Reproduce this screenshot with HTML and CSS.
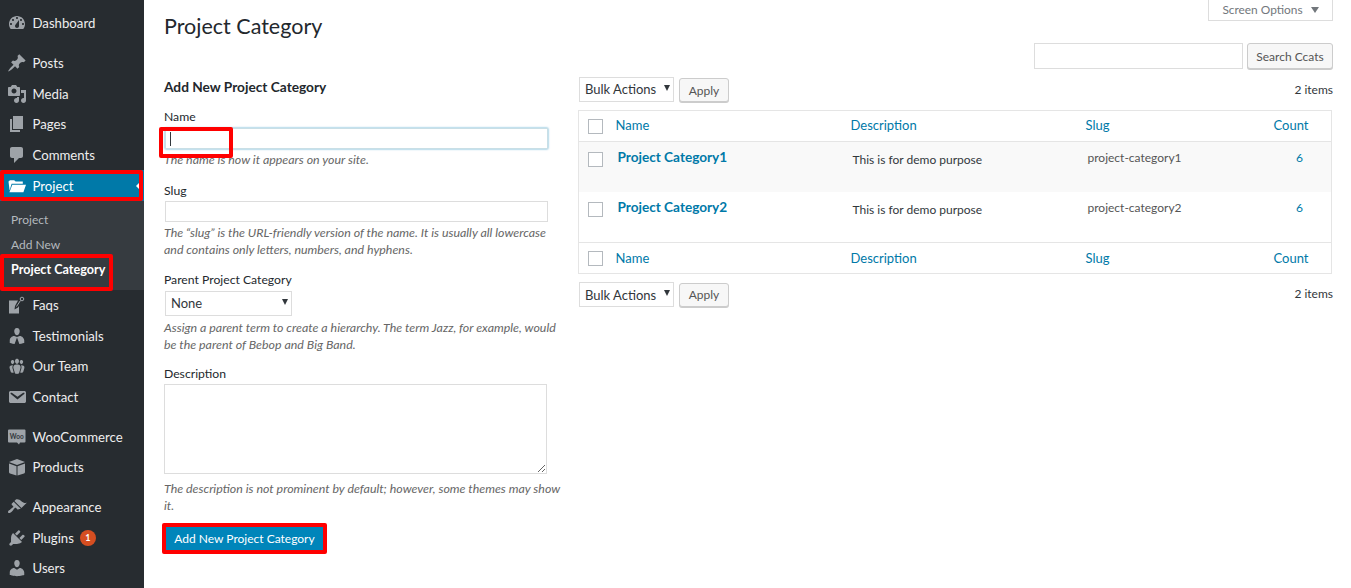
FILE: index.html
```html
<!DOCTYPE html>
<html lang="en">
<head>
<meta charset="utf-8">
<title>Project Category</title>
<link rel="stylesheet" href="styles.css">
</head>
<body>
<div class="page">
<nav class="sidebar">
  <ul class="menu">
    <li class="item"><svg class="ico" viewBox="0 0 20 20"><path fill-rule="evenodd" d="M3.76 16h12.48c1.1-1.37 1.76-3.11 1.76-5 0-4.42-3.58-8-8-8s-8 3.58-8 8c0 1.89.66 3.63 1.76 5zM10 4c.55 0 1 .45 1 1s-.45 1-1 1-1-.45-1-1 .45-1 1-1zM6 6c.55 0 1 .45 1 1s-.45 1-1 1-1-.45-1-1 .45-1 1-1zm8 0c.55 0 1 .45 1 1s-.45 1-1 1-1-.45-1-1 .45-1 1-1zm-5.37 5.55L12 7v6c0 1.1-.9 2-2 2s-2-.9-2-2c0-.57.24-1.08.63-1.45zM4 10c.55 0 1 .45 1 1s-.45 1-1 1-1-.45-1-1 .45-1 1-1zm12 0c.55 0 1 .45 1 1s-.45 1-1 1-1-.45-1-1 .45-1 1-1z"/></svg>Dashboard</li>
    <li class="item sep"><svg class="ico" viewBox="0 0 20 20"><path d="M10.44 3.02l1.82-1.82 6.36 6.35-1.83 1.82c-1.05-.68-2.48-.57-3.41.36l-.75.75c-.92.93-1.04 2.35-.35 3.41l-1.83 1.82-2.41-2.41-2.8 2.79c-.42.42-3.38 2.71-3.8 2.29s1.86-3.39 2.28-3.81l2.79-2.79L4.1 9.36l1.83-1.82c1.05.69 2.48.57 3.4-.36l.75-.75c.93-.92 1.05-2.35.36-3.41z"/></svg>Posts</li>
    <li class="item"><svg class="ico" viewBox="0 0 20 20"><path fill-rule="evenodd" d="M13 11V4c0-.55-.45-1-1-1h-1.67L9 1H5L3.67 3H2c-.55 0-1 .45-1 1v7c0 .55.45 1 1 1h10c.55 0 1-.45 1-1zM7 4.5c1.38 0 2.5 1.12 2.5 2.5S8.38 9.5 7 9.5 4.5 8.38 4.5 7 5.62 4.5 7 4.5zM14 6h5v10.5c0 1.38-1.12 2.5-2.5 2.5S14 17.88 14 16.5s1.12-2.5 2.5-2.5c.17 0 .34.02.5.05V9h-3V6zm-4 8.05V13h2v3.5c0 1.38-1.12 2.5-2.5 2.5S7 17.88 7 16.5 8.12 14 9.5 14c.17 0 .34.02.5.05z"/></svg>Media</li>
    <li class="item"><svg class="ico" viewBox="0 0 20 20"><path d="M6 15V2h10v13H6zm-1 1h8v2H3V5h2v11z"/></svg>Pages</li>
    <li class="item"><svg class="ico" viewBox="0 0 20 20"><path d="M5 2h9c1.1 0 2 .9 2 2v7c0 1.1-.9 2-2 2h-2l-5 5v-5H5c-1.1 0-2-.9-2-2V4c0-1.1.9-2 2-2z"/></svg>Comments</li>
    <li class="item current"><svg class="ico" viewBox="0 0 20 20"><path d="M1.5 5.5 3 4.2h4.2L8.6 5.6h7.2v2.2H4.6L2.6 14.5zM5.3 8.8H19l-2.6 7.4H2.4z"/></svg>Project<span class="notch"></span><span class="mark"></span></li>
    <li class="submenu">
      <span class="subitem">Project</span>
      <span class="subitem">Add New</span>
      <span class="subitem active">Project Category<span class="mark"></span></span>
    </li>
    <li class="item"><svg class="ico" viewBox="0 0 20 20"><path d="M2 5.500h9l-3 5.500-.5 3.500 3.500-2 1-1.500v7.500H2z"/><path d="M9.500 11.500l4-6" fill="none" stroke="#9ea3a8" stroke-width="1"/><circle cx="15" cy="4" r="1.800" fill="none" stroke="#9ea3a8" stroke-width="1"/></svg>Faqs</li>
    <li class="item"><svg class="ico" viewBox="0 0 20 20"><path d="M10 9.250c-2.270 0-2.730-3.440-2.730-3.440C7 4.020 7.820 2 9.970 2c2.160 0 2.980 2.020 2.710 3.810 0 0-.41 3.440-2.680 3.440zM12.720 10c2.390 0 4.520 2.330 4.520 4.530v2.490s-2.100.65-4.900.98L10 11.500 7.600 18c-2.800-.33-4.840-.98-4.840-.98v-2.490c0-2.250 1.940-4.480 4.470-4.480L10 10.900z"/></svg>Testimonials</li>
    <li class="item"><svg class="ico" viewBox="0 0 20 20"><path d="M8.030 4.460c-.29 1.280.55 3.460 1.970 3.460 1.410 0 2.250-2.180 1.960-3.460-.22-.98-1.080-1.630-1.960-1.630-.89 0-1.740.65-1.970 1.630zm-4.130.9c-.25 1.080.47 2.930 1.670 2.930s1.920-1.850 1.670-2.930c-.19-.83-.92-1.390-1.670-1.390s-1.480.56-1.670 1.390zm8.860 0c-.25 1.080.47 2.930 1.660 2.930 1.200 0 1.920-1.850 1.670-2.930-.19-.83-.92-1.390-1.670-1.390-.74 0-1.470.56-1.660 1.390zm-.59 11.430l1.250-4.300C14.200 10 12.710 8.470 10 8.470c-2.720 0-4.210 1.530-3.440 4.020l1.260 4.300C8.050 17.510 9 18 10 18c.98 0 1.940-.49 2.170-1.210zm-6.100-7.630c-.49.67-.96 1.830-.42 3.590l1.120 3.790c-.34.200-.77.310-1.200.310-.85 0-1.650-.41-1.850-1.030l-1.070-3.650c-.65-2.110.61-3.010 2.920-3.010.16 0 .3.010.5 0zm7.860 0c.14.010.3 0 .47 0 2.310 0 3.550.9 2.920 3.010l-1.070 3.650c-.2.62-1.010 1.030-1.850 1.030-.45 0-.88-.11-1.200-.31l1.100-3.790c.53-1.760.07-2.920-.37-3.590z"/></svg>Our Team</li>
    <li class="item"><svg class="ico" viewBox="0 0 20 20"><path d="M3.870 4h13.250C18.370 4 19 4.590 19 5.790v8.420c0 1.190-.63 1.790-1.880 1.790H3.870c-1.250 0-1.880-.6-1.880-1.790V5.790C2 4.590 2.620 4 3.870 4zm6.620 8.600l6.740-5.530c.24-.2.43-.66.13-1.070-.29-.41-.82-.42-1.170-.17l-5.700 3.860L4.800 5.830c-.35-.25-.88-.24-1.170.17-.3.41-.11.870.13 1.070z"/></svg>Contact</li>
    <li class="item sep"><svg class="ico" viewBox="0 0 20 20"><path d="M2 2.500h15.500a1 1 0 0 1 1 1v11a1 1 0 0 1-1 1h-4.500l-1 2-2-2H2a1 1 0 0 1-1-1v-11a1 1 0 0 1 1-1z"/><text class="woo-mark" x="9.750" y="11.500" text-anchor="middle">Woo</text></svg>WooCommerce</li>
    <li class="item"><svg class="ico" viewBox="0 0 20 20"><path d="M10 2l8 3-8 3-8-3zM2 6.500l7.500 2.800V18.500L3 16.500a1.500 1.500 0 0 1-1-1.400zM18 6.500l-7.500 2.800v9.200L17 16.500a1.500 1.500 0 0 0 1-1.400z"/></svg>Products</li>
    <li class="item sep"><svg class="ico" viewBox="0 0 20 20"><path d="M14.480 11.060L7.410 3.990l1.500-1.500c.5-.56 2.300-.47 3.510.32 1.210.8 1.430 1.280 2.910 2.100 1.180.64 2.450 1.260 4.450.85zm-.71.71L6.700 4.700 4.930 6.470c-.39.39-.39 1.020 0 1.410l1.060 1.060c.39.39.39 1.030 0 1.420-.6.6-1.430 1.110-2.210 1.690-.35.26-.7.530-1.010.84C1.430 13.230.4 14.870 1.300 15.780c.9.9 2.530-.13 3.880-1.480.31-.31.58-.66.85-1.010.57-.78 1.080-1.610 1.690-2.210.39-.39 1.020-.39 1.410 0l1.060 1.060c.39.39 1.020.39 1.410 0z"/></svg>Appearance</li>
    <li class="item"><svg class="ico" viewBox="0 0 20 20"><path d="M13.110 4.360L9.870 7.600 8 5.730l3.240-3.240c.35-.34 1.050-.2 1.560.32.52.51.66 1.210.31 1.550zm-8 1.770l.91-1.120 9.010 9.010-1.190.84c-.71.71-2.630 1.160-3.820 1.160H6.140L4.900 17.260c-.59.59-1.540.59-2.120 0-.59-.58-.59-1.530 0-2.120l1.240-1.240v-3.880c0-1.130.4-3.190 1.090-3.890zm7.260 3.970l3.240-3.240c.34-.35 1.040-.21 1.550.31.52.51.66 1.210.31 1.550l-3.240 3.250z"/></svg>Plugins<span class="badge">1</span></li>
    <li class="item"><svg class="ico" viewBox="0 0 20 20"><path d="M10 9.250c-2.270 0-2.730-3.440-2.730-3.440C7 4.020 7.820 2 9.970 2c2.160 0 2.980 2.020 2.710 3.810 0 0-.41 3.440-2.680 3.440zm0 2.570L12.720 10c2.390 0 4.520 2.330 4.520 4.530v2.490s-3.650 1.130-7.240 1.130c-3.650 0-7.240-1.130-7.240-1.130v-2.490c0-2.250 1.940-4.480 4.470-4.480z"/></svg>Users</li>
  </ul>
</nav>
<main class="main">
  <header class="head">
    <h1 class="title">Project Category</h1>
    <div class="head-right">
      <div class="screen-tab">Screen Options<span class="tri"></span></div>
      <form class="search">
        <input class="search-input" type="text" aria-label="Search">
        <button class="btn search-btn" type="button">Search Ccats</button>
      </form>
    </div>
  </header>
  <div class="columns">
    <section class="col-left">
      <h2 class="form-title">Add New Project Category</h2>
      <label class="label">Name</label>
      <div class="focus-wrap">
        <input class="field focus" type="text">
        <span class="caret"></span>
        <span class="mark name-mark"></span>
      </div>
      <p class="hint">The name is how it appears on your site.</p>
      <label class="label label-slug">Slug</label>
      <input class="field field-slug" type="text">
      <p class="hint">The “slug” is the URL-friendly version of the name. It is usually all lowercase and contains only letters, numbers, and hyphens.</p>
      <label class="label label-parent">Parent Project Category</label>
      <div class="select-wrap parent"><select class="select"><option>None</option></select></div>
      <p class="hint parent-hint">Assign a parent term to create a hierarchy. The term Jazz, for example, would be the parent of Bebop and Big Band.</p>
      <label class="label">Description</label>
      <textarea class="area"></textarea>
      <p class="hint area-hint">The description is not prominent by default; however, some themes may show it.</p>
      <div class="submit-wrap"><button class="primary" type="button">Add New Project Category</button></div>
    </section>
    <section class="col-right">
      <div class="toolbar">
        <div class="select-wrap bulk"><select class="select"><option>Bulk Actions</option></select></div>
        <button class="btn apply" type="button">Apply</button>
        <span class="count-items">2 items</span>
      </div>
      <table class="table">
        <colgroup><col class="c1"><col class="c2"><col class="c3"><col class="c4"><col class="c5"></colgroup>
        <thead><tr><th><input class="check" type="checkbox"></th><th>Name</th><th>Description</th><th>Slug</th><th>Count</th></tr></thead>
        <tbody>
          <tr class="alt"><td class="td-check"><input class="check" type="checkbox"></td><td class="td-name">Project Category1</td><td class="td-desc">This is for demo purpose</td><td class="td-slug">project-category1</td><td class="td-count">6</td></tr>
          <tr><td class="td-check"><input class="check" type="checkbox"></td><td class="td-name">Project Category2</td><td class="td-desc">This is for demo purpose</td><td class="td-slug">project-category2</td><td class="td-count">6</td></tr>
        </tbody>
        <tfoot><tr><th><input class="check" type="checkbox"></th><th>Name</th><th>Description</th><th>Slug</th><th>Count</th></tr></tfoot>
      </table>
      <div class="toolbar lower">
        <div class="select-wrap bulk"><select class="select"><option>Bulk Actions</option></select></div>
        <button class="btn apply" type="button">Apply</button>
        <span class="count-items">2 items</span>
      </div>
    </section>
  </div>
</main>
</div>
</body>
</html>
```

FILE: styles.css
```css
* { box-sizing: border-box; }
html, body { margin: 0; height: 100%; overflow: hidden; }
body { background: #fff; color: #32373c; font-family: "Lato", "Noto Sans", sans-serif; font-size: 13px; }
.page { display: flex; height: 588px; overflow: hidden; }

.sidebar { width: 144px; flex: none; background: #272c30; color: #eee; font-size: 13.200px; }
.menu { list-style: none; margin: 0; padding: 8px 0 0; }
.item { position: relative; display: flex; align-items: center; height: 30.5px; padding: 0 0 .5px 7px; }
.item.sep { margin-top: 9.5px; }
.ico { width: 20px; height: 20px; margin-right: 5.500px; fill: #9ea3a8; flex: none; }
.woo-mark { fill: #32373c; font-size: 6.500px; font-weight: 700; font-family: "Lato", sans-serif; }
.current { background: #0079a8; color: #fff; height: 31px; padding-bottom: 0; }
.current .ico { fill: #fff; }
.notch { position: absolute; right: 3px; top: 11px; border: 5px solid transparent; border-right-color: #fff; border-left-width: 0; }
.mark { position: absolute; inset: 0; border: 4px solid #f00; border-radius: 2px; pointer-events: none; }
.current .mark { right: 1px; }
.submenu { display: flex; flex-direction: column; height: 89px; padding: 6px 0 8px; background: #363b40; font-size: 12px; color: #b4b9be; }
.subitem { position: relative; display: flex; align-items: center; height: 25px; padding-left: 11px; }
.subitem.active { color: #fff; font-size: 12.600px; font-weight: 700; }
.subitem .mark { inset: -3px 31px -9px 0; }
.badge { display: inline-flex; align-items: center; justify-content: center; width: 16px; height: 16px; margin-left: 6px; border-radius: 50%; background: #d54e21; color: #fff; font-size: 9px; font-weight: 700; }

.main { flex: 1; min-width: 0; padding: 0 18px 0 20px; }
.head { display: flex; justify-content: space-between; height: 69px; }
.title { margin: 12px 0 0; font-size: 21.500px; font-weight: 400; line-height: 28px; color: #23282d; }
.head-right { display: flex; flex-direction: column; align-items: flex-end; }
.screen-tab { display: flex; align-items: center; justify-content: center; width: 125px; height: 22px; margin-top: -1px; border: 1px solid #ddd; border-top: 0; background: #fff; color: #72777c; font-size: 11.900px; }
.tri { margin-left: 8px; border: 4px solid transparent; border-top: 6px solid #72777c; border-bottom: 0; }
.search { display: flex; gap: 4px; margin-top: 22px; }
.search-input { width: 209px; height: 26px; border: 1px solid #ddd; background: #fff; }
.btn { height: 26px; padding: 0; border: 1px solid #ccc; border-radius: 3px; background: #f7f7f7; box-shadow: 0 1px 0 #ccc; color: #555; font: inherit; font-size: 12px; }
.search-btn { width: 86px; }

.columns { display: grid; grid-template-columns: 400px 1fr; column-gap: 14px; }
.form-title { margin: 9px 0 0; font-size: 13.700px; font-weight: 700; line-height: 18px; color: #23282d; }
.label { display: block; margin-top: 12px; line-height: 18px; font-size: 12.200px; color: #23282d; }
.label-slug { margin-top: 14px; }
.label-parent { margin-top: 13px; }
.field { display: block; width: 383px; height: 21px; margin: 2px 0 0 1px; border: 1px solid #ddd; background: #fff; }
.field-slug { margin-top: 1px; }
.field.focus { border-color: #c9dfe6; box-shadow: 0 0 2px rgba(30, 140, 190, .8); }
.focus-wrap { position: relative; }
.caret { position: absolute; left: 6px; top: 4px; width: 1px; height: 14px; background: #32373c; }
.name-mark { inset: -1px auto auto -5px; width: 74px; height: 31px; }
.hint { margin: 2px 0 0; font-size: 12.400px; font-style: italic; line-height: 17px; color: #666; }
.select-wrap { position: relative; height: 25px; }
.select-wrap::after { content: ""; position: absolute; right: 4px; top: 8px; border: 3.500px solid transparent; border-top: 6px solid #32373c; border-bottom: 0; pointer-events: none; }
.select { display: block; width: 100%; height: 100%; padding: 0 4px 2px 5px; border: 1px solid #ddd; border-radius: 0; background: #fff; color: #32373c; font: inherit; font-size: 13px; appearance: none; }
.parent { width: 127px; margin: 2px 0 0 1px; }
.parent-hint { margin-top: 3px; }
.area { display: block; width: 383px; height: 90px; margin: 1px 0 0; border: 1px solid #ddd; background: #fff; }
.area-hint { margin-top: 6px; }
.submit-wrap { position: relative; width: 165px; height: 31px; margin: 9px 0 0 -2px; padding: 0; border: 4px solid #f00; border-radius: 2px; }
.primary { display: block; width: 100%; height: 100%; padding: 0; border: 0; background: #0085ba; color: #fff; font: inherit; font-size: 12px; white-space: nowrap; }

.toolbar { display: flex; align-items: center; gap: 5px; height: 25px; margin: 8px 0 8px 1px; }
.bulk { width: 95px; }
.apply { width: 50px; height: 24px; padding: 0; margin-top: 1px; }
.count-items { margin-left: auto; font-size: 12px; color: #32373c; }
.lower .count-items { padding-bottom: 2px; }
.lower .select { padding-bottom: 0; }
.lower .apply { padding-bottom: 2px; }

.table { width: 754px; table-layout: fixed; border-collapse: separate; border-spacing: 0; border: 1px solid #e5e5e5; }
.c1 { width: 26px; } .c2 { width: 235px; } .c3 { width: 235px; } .c4 { width: 188px; } .c5 { width: 68px; }
th { height: 31px; padding: 0 0 2px 10.500px; text-align: left; font-weight: 400; color: #0079a8; font-size: 13px; }
th:first-child { padding: 0 0 0 9px; }
thead th { border-bottom: 1px solid #e5e5e5; }
tfoot th { border-top: 1px solid #e5e5e5; padding-bottom: 1px; }
td { height: 50px; vertical-align: top; padding: 0 0 0 12.500px; font-size: 12px; color: #32373c; }
.alt td { background: #f9f9f9; }
.td-check { padding: 10px 0 0 9px; }
.td-name { padding-top: 7px; font-size: 13.600px; font-weight: 700; color: #0079a8; }
.td-desc { padding-top: 10px; }
.td-slug { padding-top: 8px; color: #555; }
.td-count { padding: 8px 0 0 5px; text-align: center; color: #0079a8; }
.check { display: block; width: 15px; height: 15px; margin: 0; border: 1px solid #b4b9be; background: #fff; appearance: none; }
```
